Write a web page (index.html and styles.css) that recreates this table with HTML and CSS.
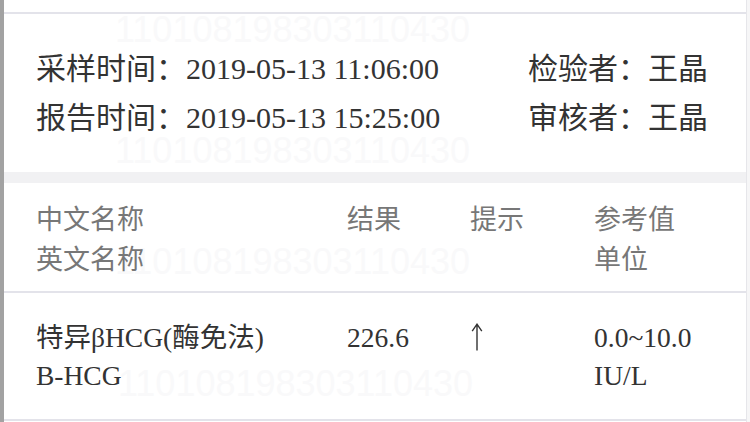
FILE: index.html
```html
<!DOCTYPE html>
<html lang="zh-CN">
<head>
<meta charset="utf-8">
<link rel="stylesheet" href="styles.css">
</head>
<body>
<div class="page">
  <div class="watermarks" aria-hidden="true">
    <span class="wm wm1">110108198303110430</span>
    <span class="wm wm2">110108198303110430</span>
    <span class="wm wm3">110108198303110430</span>
    <span class="wm wm4">110108198303110430</span>
  </div>
  <div class="top-gap"></div>
  <section class="info">
    <div class="info-row">
      <div class="info-left">采样时间：<span class="lat">2019-05-13 11:06:00</span></div>
      <div class="info-right">检验者：王晶</div>
    </div>
    <div class="info-row">
      <div class="info-left">报告时间：<span class="lat">2019-05-13 15:25:00</span></div>
      <div class="info-right">审核者：王晶</div>
    </div>
  </section>
  <div class="band"></div>
  <section class="table-head grid">
    <div class="cell">中文名称<br>英文名称</div>
    <div class="cell">结果</div>
    <div class="cell">提示</div>
    <div class="cell">参考值<br>单位</div>
  </section>
  <section class="table-row grid">
    <div class="cell">特异βHCG(酶免法)<br>B-HCG</div>
    <div class="cell">226.6</div>
    <div class="cell arrow"><svg width="12" height="28" viewBox="0 0 12 28" aria-label="↑"><path d="M6 27.5V1.5M1.2 8.2L6 1.2l4.8 7" fill="none" stroke="#333" stroke-width="1.4"/></svg></div>
    <div class="cell">0.0~10.0<br>IU/L</div>
  </section>
</div>
</body>
</html>
```
FILE: styles.css
```css
html, body {
  margin: 0;
  padding: 0;
}
body {
  background: #f6f6f7;
  width: 750px;
  height: 422px;
  overflow: hidden;
  font-family: "Liberation Serif", "Noto Sans CJK SC", serif;
}
.page {
  position: relative;
  isolation: isolate;
  width: 742px;
  height: 422px;
  background: #fff;
  border-left: 4px solid #a2a2a2;
  border-right: 1px solid #e6e6ea;
  box-sizing: content-box;
  overflow: hidden;
}
.top-gap {
  height: 12px;
  border-bottom: 2px solid #e3e3ea;
}
.info {
  position: relative;
  z-index: 1;
  height: 158px;
  box-sizing: border-box;
  padding: 30px 38px 0 32px;
  color: #333;
  font-size: 30px;
}
.info-row {
  display: flex;
  justify-content: space-between;
  line-height: 49px;
  height: 49px;
}
.info-left, .info-right {
  white-space: nowrap;
}
.band {
  position: relative;
  z-index: 1;
  height: 11px;
  background: #f1f1f3;
}
.grid {
  position: relative;
  z-index: 1;
  display: grid;
  grid-template-columns: 311px 123px 124px 1fr;
  padding-left: 32px;
  box-sizing: border-box;
}
.table-head {
  height: 110px;
  padding-top: 15px;
  color: #777;
  font-family: "Noto Sans CJK SC", sans-serif;
  font-size: 27px;
  line-height: 40px;
  border-bottom: 2px solid #e3e3ea;
}
.table-row {
  height: 128px;
  padding-top: 26px;
  color: #333;
  font-size: 27.5px;
  line-height: 38px;
  border-bottom: 2px solid #e3e3ea;
}
.cell {
  white-space: nowrap;
}
.arrow {
  padding-left: 1px;
}
.arrow svg {
  display: block;
  margin-top: 4px;
}
.watermarks {
  position: absolute;
  inset: 0;
  z-index: 0;
  pointer-events: none;
}
.wm {
  position: absolute;
  font-family: "Liberation Sans", sans-serif;
  font-size: 36px;
  line-height: 1;
  color: #f9f9fa;
  white-space: nowrap;
}
.wm1 { left: 111px; top: 12px; }
.wm2 { left: 111px; top: 133px; }
.wm3 { left: 111px; top: 244px; }
.wm4 { left: 114px; top: 366px; }
```
